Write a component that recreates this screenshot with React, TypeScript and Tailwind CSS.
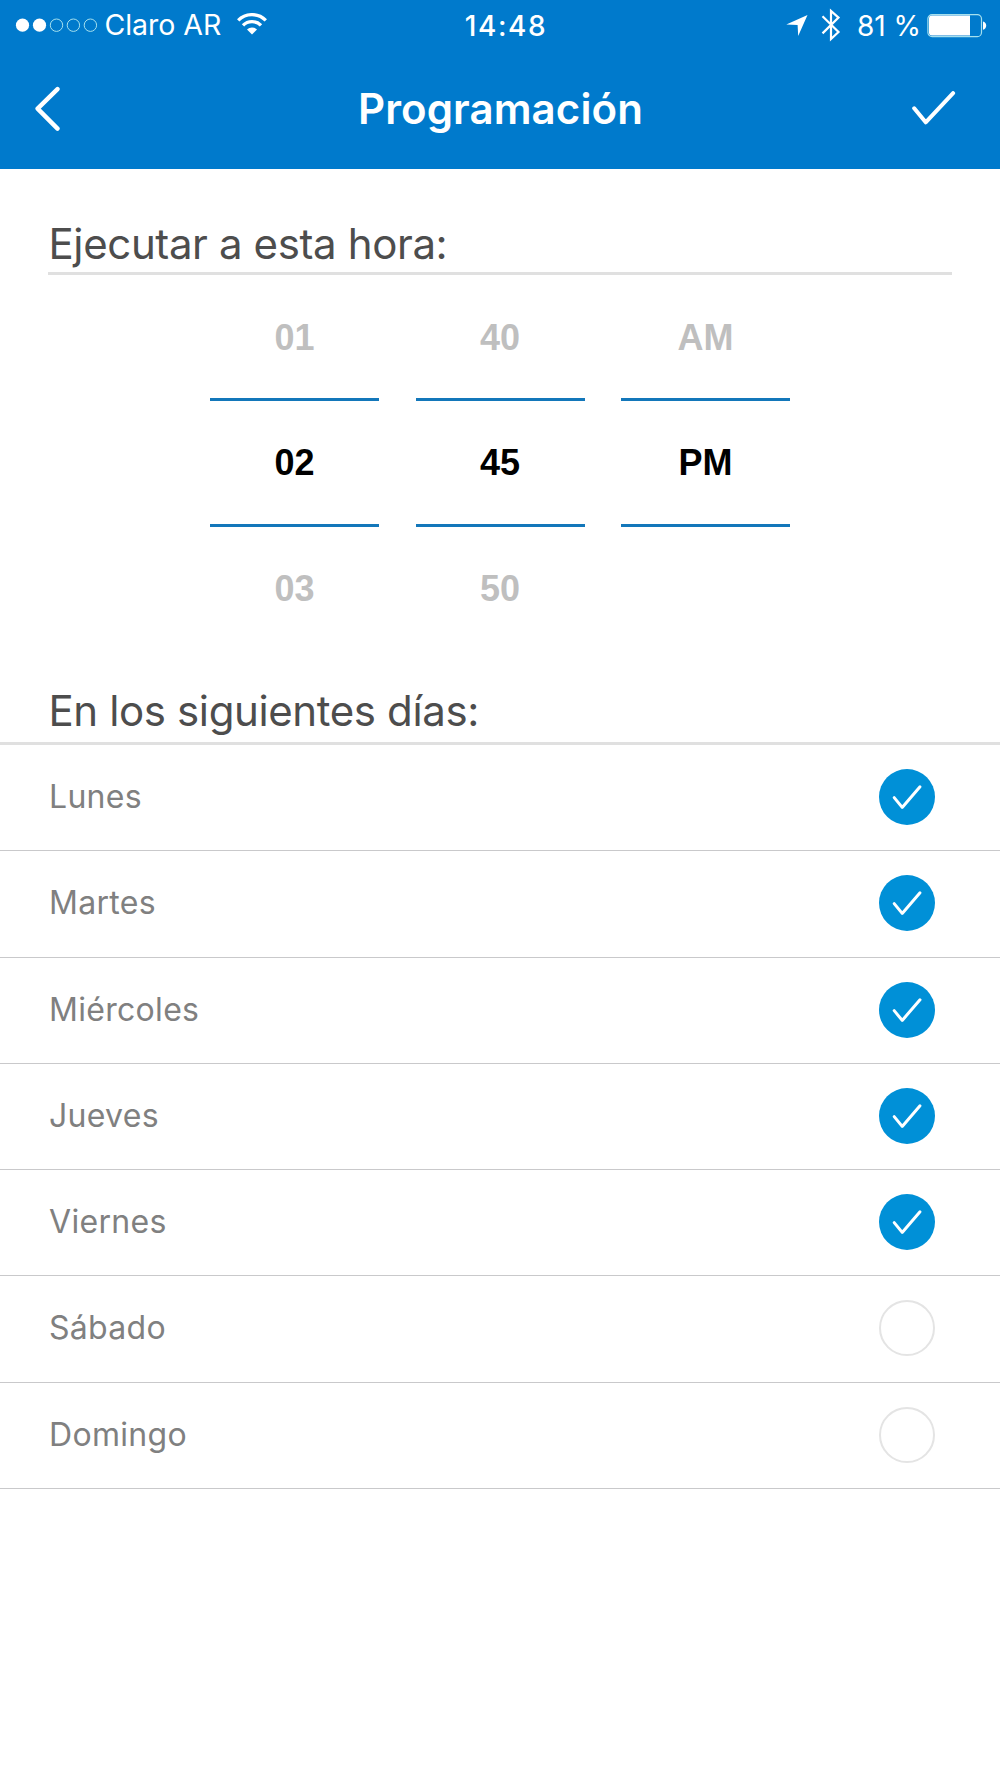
const days = [
  { name: "Lunes", active: true },
  { name: "Martes", active: true },
  { name: "Miércoles", active: true },
  { name: "Jueves", active: true },
  { name: "Viernes", active: true },
  { name: "Sábado", active: false },
  { name: "Domingo", active: false },
];

const columns = [
  { prev: "01", current: "02", next: "03" },
  { prev: "40", current: "45", next: "50" },
  { prev: "AM", current: "PM", next: "" },
];

const SignalDots = () => (
  <svg width="84" height="16" viewBox="0 0 84 16" fill="none">
    <circle cx="7.5" cy="7.2" r="6.6" fill="white" />
    <circle cx="24.5" cy="7.2" r="6.6" fill="white" />
    <circle cx="41.5" cy="7.2" r="6.2" stroke="#a5e0ee" />
    <circle cx="58.4" cy="7.2" r="6.2" stroke="#a5e0ee" />
    <circle cx="75.4" cy="7.2" r="6.2" stroke="#a5e0ee" />
  </svg>
);

const WifiIcon = () => (
  <svg width="30" height="22" viewBox="0 0 30 22" fill="none" stroke="white" strokeWidth="3.3">
    <path d="M1.2 7.4a19.4 19.4 0 0 1 27.6 0" />
    <path d="M6 12.4a12.6 12.6 0 0 1 18 0" />
    <path d="M15 21.6l-5-5.2a7.2 7.2 0 0 1 10 0z" fill="white" stroke="none" />
  </svg>
);

const LocationIcon = () => (
  <svg width="22" height="22" viewBox="0 0 22 22" fill="white">
    <path d="M21.5 0L12.2 21L11.6 9.9L0.3 9.4z" />
  </svg>
);

const BluetoothIcon = () => (
  <svg width="20" height="34" viewBox="0 0 20 34" fill="none" stroke="white" strokeWidth="2.2">
    <path d="M1.5 8.2L17.5 24L10 31V3L17.5 9.6L1.5 25.4" />
  </svg>
);

const BatteryIcon = () => (
  <svg width="60" height="24" viewBox="0 0 60 24" fill="none">
    <rect x="0.9" y="0.6" width="53.6" height="22" rx="4.2" stroke="#a5e0ee" strokeWidth="1.2" />
    <path d="M5 1.6H43V21.6H5a3 3 0 0 1-3-3V4.6a3 3 0 0 1 3-3z" fill="white" />
    <path d="M56 7.4c2 .4 3.2 2 3.2 4.2s-1.2 3.8-3.2 4.2z" fill="white" />
  </svg>
);

const StatusBar = () => (
  <div className="grid grid-cols-3 items-center h-[51px] pl-[15px] pr-[13px] text-white leading-none">
    <div className="flex items-center">
      <SignalDots />
      <span className="ml-[5.5px] text-[28.5px] tracking-[-0.05px]">Claro AR</span>
      <span className="ml-4 -mt-[3px]">
        <WifiIcon />
      </span>
    </div>
    <p className="pl-[10px] text-center text-[28px] font-medium tracking-[1.6px]">14:48</p>
    <div className="flex items-center justify-end">
      <LocationIcon />
      <span className="ml-[13px] mr-[16px] -mt-[2px]">
        <BluetoothIcon />
      </span>
      <span className="mr-[6px] text-[28px] whitespace-nowrap">81 %</span>
      <BatteryIcon />
    </div>
  </div>
);

const NavBar = () => (
  <div className="flex items-center justify-between h-[116px] pl-[35px] pr-[44px]">
    <svg width="26" height="46" viewBox="0 0 26 46" fill="none" stroke="white" strokeWidth="4.4" strokeLinecap="round" strokeLinejoin="round">
      <path d="M22.5 3.1L2.6 22.6L22.5 42.6" />
    </svg>
    <h1 className="pl-[28px] text-[42px] leading-none font-semibold tracking-[0.1px] text-white">Programación</h1>
    <svg width="44" height="36" viewBox="0 0 44 36" fill="none" stroke="white" strokeWidth="4" strokeLinecap="round" strokeLinejoin="round">
      <path d="M2.2 17.3L13.7 31.3L41.1 2.1" />
    </svg>
  </div>
);

const PickerColumn = ({ prev, current, next }: { prev: string; current: string; next: string }) => (
  <div className="w-[169px] text-center text-[36px] font-bold font-['Liberation_Sans',Arial,sans-serif] text-[#bfbfbf]">
    <p className="h-[123px] leading-[125px]">{prev}</p>
    <p className="h-[129px] leading-[124px] border-y-3 border-[#1377ba] text-black">{current}</p>
    <p className="h-[124px] leading-[124px]">{next}</p>
  </div>
);

const DayRow = ({ name, active }: { name: string; active: boolean }) => (
  <li className="flex items-center justify-between h-[106.25px] pl-[49px] pr-[65px] pb-px border-b border-[#c9c9cb]">
    <span className="text-[32px] leading-none tracking-[0.3px] text-[#808080]">{name}</span>
    {active ? (
      <span className="size-14 rounded-full bg-[#0090d7]">
        <svg width="56" height="56" viewBox="0 0 56 56" fill="none" stroke="white" strokeWidth="3" strokeLinecap="round" strokeLinejoin="round">
          <path d="M15.2 28.6L23.2 38.4L41 17.8" />
        </svg>
      </span>
    ) : (
      <span className="size-14 rounded-full border-2 border-[#e4e4e4]" />
    )}
  </li>
);

export default function App() {
  return (
    <div className="w-[1000px] h-[1778px] overflow-hidden bg-white font-['Inter',sans-serif]">
      <header className="h-[169px] bg-[#007acc]">
        <StatusBar />
        <NavBar />
      </header>

      <section className="mx-12 pt-[46px]">
        <h2 className="h-[60px] pl-[0.5px] leading-[57px] text-[42px] tracking-[-0.38px] text-[#4d4d4d] border-b-3 border-[#e0e0e0]">
          Ejecutar a esta hora:
        </h2>
        <div className="flex justify-center gap-[36.5px]">
          {columns.map((column) => (
            <PickerColumn key={column.current} {...column} />
          ))}
        </div>
      </section>

      <section className="pt-[29px]">
        <h2 className="h-[65px] pl-[48.5px] leading-[62px] text-[42px] tracking-[-0.38px] text-[#4d4d4d] border-b-3 border-[#e0e0e0]">
          En los siguientes días:
        </h2>
        <ul>
          {days.map((day) => (
            <DayRow key={day.name} {...day} />
          ))}
        </ul>
      </section>
    </div>
  );
}
